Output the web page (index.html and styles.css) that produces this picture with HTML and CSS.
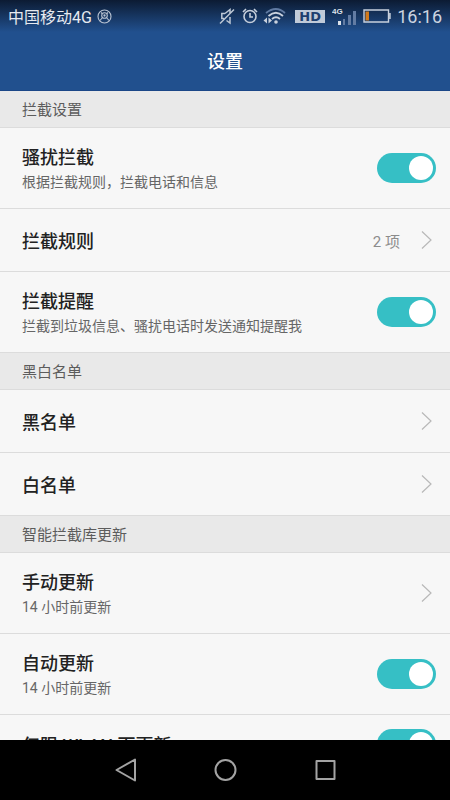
FILE: index.html
```html
<!DOCTYPE html>
<html lang="zh-CN">
<head>
<meta charset="utf-8">
<meta name="viewport" content="width=device-width, initial-scale=1">
<title>设置</title>
<link rel="stylesheet" href="styles.css">
</head>
<body>
<header class="top">
  <div class="status">
    <span>中国移动4G</span>
    <svg class="carrier" width="15" height="15" viewBox="0 0 15 15" fill="none" stroke="#b9c3d2" stroke-width="1.1"><circle cx="7.500" cy="7.500" r="6.500"/><circle cx="7.500" cy="6.500" r="2.800"/><circle cx="7.500" cy="6.500" r=".6"/><path d="M5.500 8.500 3 11.500M9.500 8.500l2.500 3M4 3.500l1 1M11 3.500l-1 1"/></svg>
    <div class="icons">
      <svg width="16" height="18" viewBox="0 0 16 18" fill="none" stroke="#bdc7d5" stroke-width="1.5"><path d="M6 6.500H2.800v5H5M6 6.500l5-4v4M11 10v6l-3.500-2.500M1 16.500 15 2.500"/></svg>
      <svg class="alarm" width="16" height="18" viewBox="0 0 16 18" fill="none" stroke="#c5cedb" stroke-width="1.6"><circle cx="8" cy="9.500" r="6"/><path d="M8 6v4h3M1 5l3-3M15 5l-3-3"/></svg>
      <svg class="wifi" width="23" height="18" viewBox="0 0 23 18" fill="none" stroke="#c9d1dd" stroke-width="1.800"><path d="M3 6Q13 -2 22 6" stroke="#607aa2"/><path d="M5.500 9Q13 2.500 20 9M9 12q4-3.500 8 0"/><circle cx="13" cy="15" r="1.800" fill="#c9d1dd" stroke="none"/><path d="M4 10.500v6L.5 13.500zM5.500 10.500v6l3.500-3z" fill="#c9d1dd" stroke="none"/></svg>
      <span class="hd">HD</span>
      <svg class="signal" width="25" height="22" viewBox="0 0 25 22"><text class="net" x="0" y="9">4G</text><path d="M6 16h3v4H6z" fill="#dce2ea"/><path d="M11 14h2v6h-2zM16 10h3v10h-3zM21 6h3v14h-3z" fill="#637ca3"/></svg>
      <svg class="battery" width="28" height="16" viewBox="0 0 28 16"><path d="M1 2h24.500v12H1zM27 5v6" fill="none" stroke="#c9d1dd" stroke-width="1.400"/><path d="M2.500 3.500H6v9H2.500z" fill="#d27a1c"/></svg>
      <time class="clock">16:16</time>
    </div>
  </div>
  <h1 class="title">设置</h1>
</header>
<main class="list">
  <h2 class="section">拦截设置</h2>
  <label class="row tall"><span class="text"><span class="name">骚扰拦截</span><span class="note">根据拦截规则，拦截电话和信息</span></span><input class="switch" type="checkbox" checked></label>
  <a class="row" href="#rules"><span class="text"><span class="name">拦截规则</span></span><span class="value">2 项</span><svg class="chevron" viewBox="0 0 11 18"><path d="M1 .5 10 9 1 17.500"/></svg></a>
  <label class="row tall"><span class="text"><span class="name">拦截提醒</span><span class="note">拦截到垃圾信息、骚扰电话时发送通知提醒我</span></span><input class="switch" type="checkbox" checked></label>
  <h2 class="section">黑白名单</h2>
  <a class="row" href="#black"><span class="text"><span class="name">黑名单</span></span><svg class="chevron" viewBox="0 0 11 18"><path d="M1 .5 10 9 1 17.500"/></svg></a>
  <a class="row" href="#white"><span class="text"><span class="name">白名单</span></span><svg class="chevron" viewBox="0 0 11 18"><path d="M1 .5 10 9 1 17.500"/></svg></a>
  <h2 class="section">智能拦截库更新</h2>
  <a class="row tall" href="#update"><span class="text"><span class="name">手动更新</span><span class="note">14 小时前更新</span></span><svg class="chevron" viewBox="0 0 11 18"><path d="M1 .5 10 9 1 17.500"/></svg></a>
  <label class="row tall"><span class="text"><span class="name">自动更新</span><span class="note">14 小时前更新</span></span><input class="switch" type="checkbox" checked></label>
  <label class="row compact"><span class="text"><span class="name">仅限 WLAN 下更新</span></span><input class="switch" type="checkbox" checked></label>
</main>
<nav class="nav">
  <button class="key" aria-label="返回"><svg width="24" height="26" viewBox="0 0 24 26"><path d="M22 2.500v21L3.500 13z"/></svg></button>
  <button class="key" aria-label="主屏幕"><svg width="24" height="26" viewBox="0 0 24 26"><circle cx="12.500" cy="13" r="10"/></svg></button>
  <button class="key" aria-label="最近任务"><svg width="24" height="26" viewBox="0 0 24 26"><path d="M3.500 4h18v18h-18z"/></svg></button>
</nav>
</body>
</html>
```

FILE: styles.css
```css
* { box-sizing: border-box; }

body {
  margin: 0;
  height: 100vh;
  display: flex;
  flex-direction: column;
  background: #f7f7f7;
  color: #222;
  font-family: Roboto, "Noto Sans CJK SC", sans-serif;
}

.top {
  flex: none;
  background: linear-gradient(#0c1b33, #21508e 32px);
  border-bottom: 1px solid #1b4788;
  color: #fff;
}

.status {
  display: flex;
  align-items: center;
  height: 32px;
  padding: 0 8px;
  font-size: 16px;
  color: #e6eaf0;
}

.carrier { margin-left: 5px; }

.icons {
  display: flex;
  align-items: center;
  margin-left: auto;
}

.alarm { margin-left: 7px; }
.wifi { margin-left: 5px; }

.hd {
  width: 30px;
  margin-left: 9px;
  border: 1px solid #c0cad8;
  background: #c0cad8;
  color: #1d3f70;
  font: bold 13px/11px "DejaVu Sans", sans-serif;
  text-align: center;
}

.signal { margin-left: 7px; }

.net {
  font: bold 8px "Liberation Sans", sans-serif;
  fill: #dce2ea;
}

.battery { margin-left: 6px; }

.clock {
  margin-left: 6px;
  font-size: 18px;
  color: #ccd4e0;
}

.title {
  margin: 0;
  padding-top: 2px;
  font-size: 18px;
  font-weight: 500;
  line-height: 56px;
  text-align: center;
}

.list {
  flex: 1;
  min-height: 0;
  overflow: hidden;
}

.section {
  margin: 0;
  height: 37px;
  padding: 2px 0 0 22px;
  border-bottom: 1px solid #dcdcdc;
  background: #e9e9e9;
  color: #5c5c5c;
  font-size: 15px;
  font-weight: 400;
  line-height: 34px;
}

.row {
  display: flex;
  align-items: center;
  min-height: 63px;
  padding: 0 14px 0 22px;
  border-bottom: 1px solid #dcdcdc;
  color: inherit;
  text-decoration: none;
}

.tall { min-height: 81px; }
.compact { min-height: 59px; }

.text {
  display: flex;
  flex-direction: column;
  flex: 1;
  padding-top: 3px;
}

.name {
  font-size: 18px;
  font-weight: 500;
  line-height: 26px;
}

.note {
  color: #666;
  font-size: 14px;
  line-height: 23px;
}

.value {
  margin-right: 21px;
  color: #8c8c8c;
  font-size: 15px;
}

.chevron {
  flex: none;
  width: 11px;
  height: 18px;
  margin-right: 4px;
  fill: none;
  stroke: #b8b8b8;
  stroke-width: 1.2;
}

.switch {
  flex: none;
  appearance: none;
  display: flex;
  justify-content: flex-end;
  align-items: center;
  width: 59px;
  height: 30px;
  margin: 0;
  padding: 0 3px;
  border-radius: 15px;
  background: #a8a8a8;
}

.switch:checked { background: #36bfc5; }

.switch::before {
  content: "";
  width: 24px;
  height: 24px;
  border-radius: 50%;
  background: #fff;
}

.switch:not(:checked) { justify-content: flex-start; }

.nav {
  flex: none;
  display: flex;
  justify-content: center;
  gap: 76px;
  height: 60px;
  background: #000;
}

.key {
  display: flex;
  align-items: center;
  padding: 0;
  border: 0;
  background: none;
}

.key svg {
  fill: none;
  stroke: #a3a3a3;
  stroke-width: 2;
  stroke-linejoin: round;
}
```
